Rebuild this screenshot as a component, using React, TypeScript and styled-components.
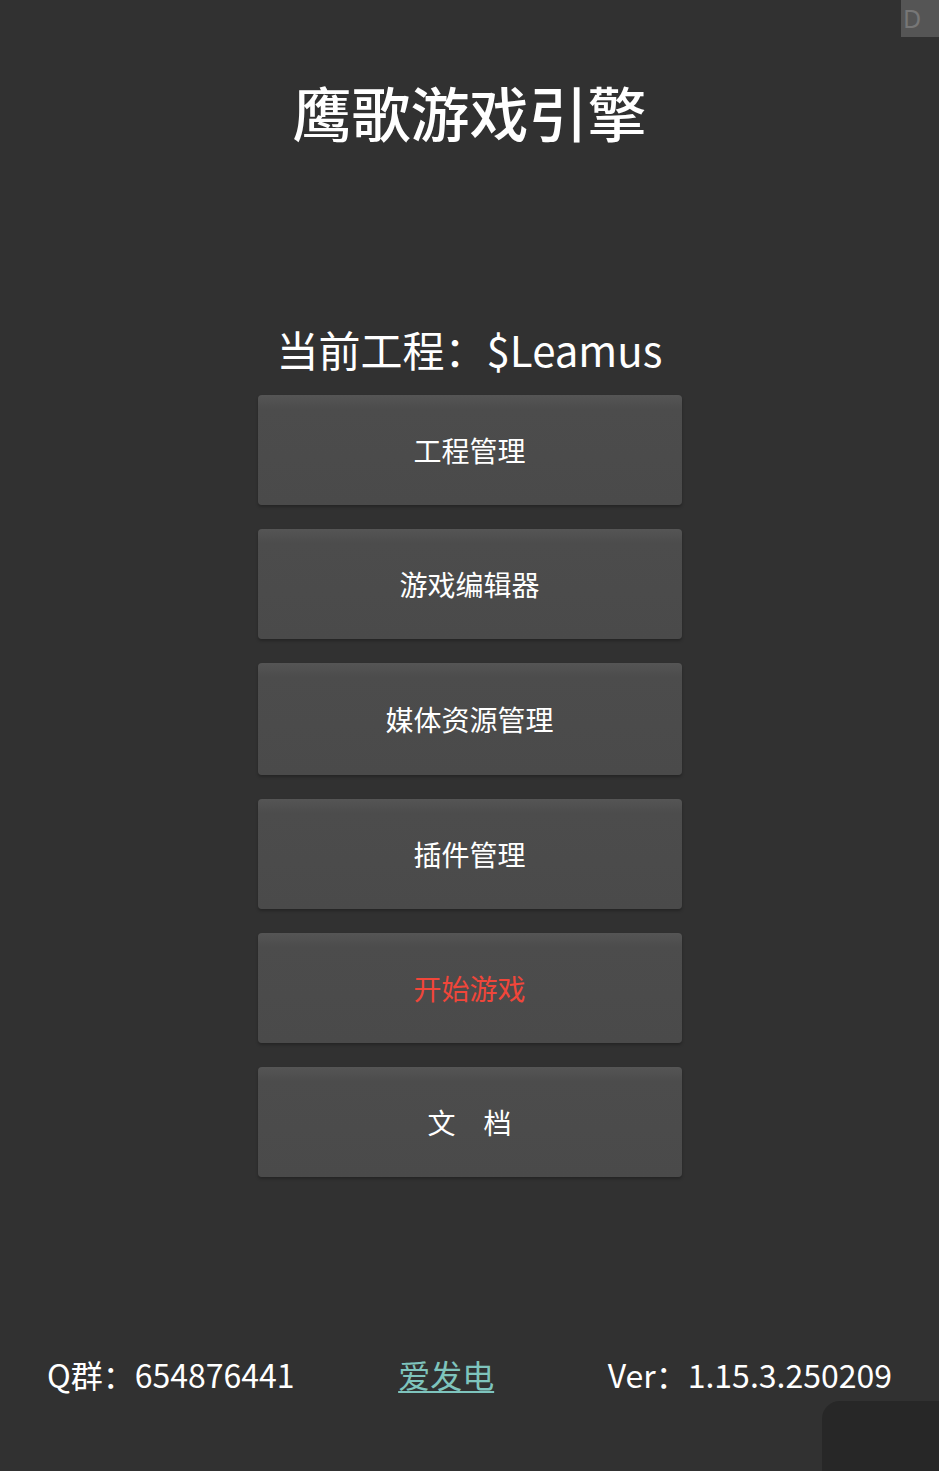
import React from "react";
import styled, { createGlobalStyle } from "styled-components";

const Global = createGlobalStyle`
  html, body { margin: 0; padding: 0; background: #313131; }
  body { font-family: "Noto Sans CJK SC", "Noto Sans", sans-serif; }
`;

const Page = styled.div`
  position: relative;
  width: 939px;
  height: 1471px;
  background: #313131;
  color: #ffffff;
  display: flex;
  flex-direction: column;
  align-items: center;
  overflow: hidden;
`;

const Title = styled.h1`
  margin: 73px 0 0;
  font-size: 59px;
  font-weight: 500;
  line-height: 78px;
  letter-spacing: 0;
  color: #ffffff;
`;

const Project = styled.div`
  margin-top: 170px;
  font-size: 42px;
  line-height: 56px;
  color: #ffffff;
`;

const Menu = styled.div`
  margin-top: 18px;
  display: flex;
  flex-direction: column;
  gap: 24px;
`;

const MenuButton = styled.button<{ $danger?: boolean; $tall?: boolean }>`
  width: 424px;
  height: ${(p) => (p.$tall ? 112 : 110)}px;
  border: none;
  border-radius: 4px;
  background: linear-gradient(to bottom, #555555 0px, #4c4c4c 14px, #4a4a4a 100%);
  box-shadow: 0 2px 3px rgba(0, 0, 0, 0.25);
  color: ${(p) => (p.$danger ? "#f0463a" : "#ffffff")};
  font-family: "Noto Sans CJK SC", sans-serif;
  font-size: 28px;
  padding: 0;
  cursor: pointer;
  white-space: pre;
`;

const Footer = styled.div`
  position: absolute;
  left: 47px;
  right: 47px;
  top: 1350px;
  display: flex;
  justify-content: space-between;
  align-items: center;
  font-size: 32px;
  line-height: 48px;
`;

const FooterText = styled.span`
  color: #ffffff;
`;

const FooterLink = styled.a`
  color: #7ec4bd;
  text-decoration: underline;
  text-decoration-thickness: 2px;
  text-underline-offset: 3px;
  margin-right: 10px;
`;

const DebugTab = styled.div`
  position: absolute;
  top: 0;
  right: 0;
  width: 38px;
  height: 37px;
  background: #555555;
  color: #777777;
  font-family: "Noto Sans", sans-serif;
  font-size: 25px;
  line-height: 37px;
  padding-left: 2px;
  box-sizing: border-box;
`;

const CornerPanel = styled.div`
  position: absolute;
  left: 822px;
  top: 1401px;
  width: 140px;
  height: 90px;
  background: #272727;
  border-radius: 18px;
`;

const items = [
  { label: "工程管理" },
  { label: "游戏编辑器" },
  { label: "媒体资源管理", tall: true },
  { label: "插件管理" },
  { label: "开始游戏", danger: true },
  { label: "文　档" },
];

export default function App() {
  return (
    <Page>
      <Global />
      <Title>鹰歌游戏引擎</Title>
      <Project>当前工程：$Leamus</Project>
      <Menu>
        {items.map((it) => (
          <MenuButton key={it.label} $danger={it.danger} $tall={it.tall}>
            {it.label}
          </MenuButton>
        ))}
      </Menu>
      <Footer>
        <FooterText>Q群：654876441</FooterText>
        <FooterLink href="#">爱发电</FooterLink>
        <FooterText>Ver：1.15.3.250209</FooterText>
      </Footer>
      <DebugTab>D</DebugTab>
      <CornerPanel />
    </Page>
  );
}
